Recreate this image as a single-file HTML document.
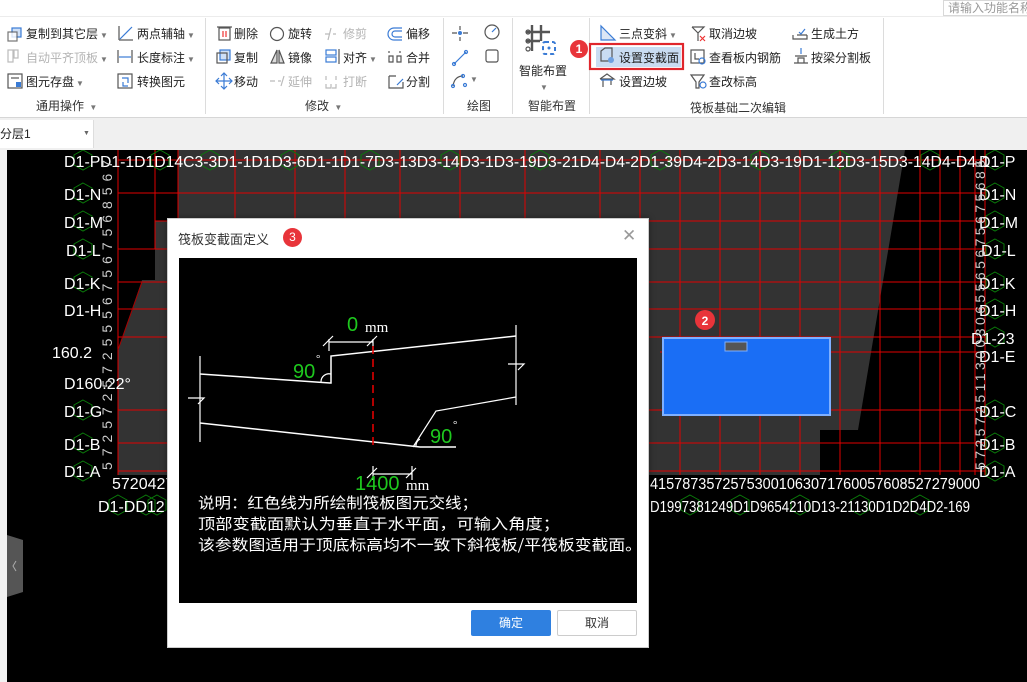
<!DOCTYPE html>
<html><head><meta charset="utf-8"><style>
*{margin:0;padding:0;box-sizing:border-box}
body{width:1027px;height:682px;overflow:hidden;position:relative;background:#fff;font-family:"Liberation Sans","Noto Sans CJK SC",sans-serif;font-size:12px;color:#222}
.a{position:absolute;white-space:nowrap}
.t{position:absolute;white-space:nowrap;font-size:12px;line-height:14px}
.g{color:#b4b4b4}
.sep{position:absolute;top:18px;width:1px;height:96px;background:#dcdcdc}
.lbl{position:absolute;top:97px;font-size:12px;color:#333}
.dd{font-size:8px;color:#777;margin-left:2px}
</style></head><body>
<div class="a" style="left:0;top:0;width:1027px;height:17px;background:#fff;border-bottom:1px solid #ececec"></div>
<div class="a" style="left:943px;top:0;width:90px;height:16px;border:1px solid #d8d8d8;color:#999;font-size:12px;line-height:14px;padding-left:4px">请输入功能名称</div>
<div class="a" style="left:0;top:17px;width:1027px;height:101px;background:#fff;border-bottom:1px solid #d6d6d6"></div>
<div class="sep" style="left:205px"></div><div class="sep" style="left:443px"></div><div class="sep" style="left:512px"></div><div class="sep" style="left:589px"></div><div class="sep" style="left:883px"></div>

<svg class="a" style="left:0;top:0" width="1027" height="118" fill="none" stroke-width="1.2">
<rect x="12" y="28" width="9" height="9" stroke="#3a7bd5" fill="#cfe0f7"/><rect x="8" y="32" width="9" height="9" stroke="#555" fill="#fff" opacity=".8"/>
<rect x="8" y="50" width="5" height="12" stroke="#bbb"/><rect x="14" y="50" width="4" height="8" stroke="#bbb"/>
<rect x="8" y="74" width="14" height="14" stroke="#555"/><line x1="11" y1="78" x2="19" y2="78" stroke="#555"/><rect x="16" y="82" width="5" height="5" fill="#3a7bd5"/>
<line x1="119" y1="26" x2="119" y2="40" stroke="#555"/><line x1="119" y1="40" x2="133" y2="40" stroke="#555"/><line x1="120" y1="39" x2="132" y2="27" stroke="#3a7bd5"/>
<line x1="118" y1="50" x2="118" y2="63" stroke="#555"/><line x1="132" y1="50" x2="132" y2="63" stroke="#555"/><line x1="119" y1="57" x2="131" y2="57" stroke="#3a7bd5"/>
<rect x="118" y="74" width="14" height="14" stroke="#555"/><path d="M122 78h6v5M128 86h-5v-4" stroke="#3a7bd5"/>
<rect x="219" y="28" width="11" height="12" stroke="#555"/><line x1="217" y1="27" x2="232" y2="27" stroke="#555"/><path d="M223 31v6M226 31v6" stroke="#e33"/>
<rect x="220" y="50" width="10" height="10" stroke="#3a7bd5" fill="#cfe0f7"/><rect x="217" y="53" width="10" height="10" stroke="#555"/>
<path d="M224 73v16M216 81h16M221 76l3-3 3 3M221 86l3 3 3-3M219 78l-3 3 3 3M229 78l3 3-3 3" stroke="#3a7bd5"/>
<circle cx="277" cy="34" r="6.5" stroke="#555"/>
<path d="M277 50l-6 13h6zM279 50l5 13h-5z" stroke="#555" fill="#ddd"/>
<path d="M270 81h5M278 81h3M284 76l-3 10" stroke="#bbb"/>
<path d="M325 34h5M333 34h3M331 28l-3 12" stroke="#bbb"/>
<rect x="326" y="50" width="10" height="5" stroke="#3a7bd5"/><rect x="326" y="57" width="10" height="5" stroke="#3a7bd5"/><line x1="339" y1="49" x2="339" y2="64" stroke="#555"/>
<path d="M326 76v4M326 84v4h5v-4M336 76v4M336 84v4h-4" stroke="#bbb"/>
<path d="M402 28h-8a6 6 0 0 0 0 12h8M402 31h-7a3 3 0 0 0 0 6h7" stroke="#3a7bd5"/>
<path d="M389 51v2M400 51v2M389 56h4v6h-4zM397 56h4v6h-4z" stroke="#555"/>
<path d="M389 76h7M389 76v12h14v-6" stroke="#555"/><path d="M397 85l6-6" stroke="#3a7bd5"/>
<path d="M452 33h5M463 33h5M460 26v4M460 37v4" stroke="#555"/><circle cx="460" cy="33" r="2" fill="#3a7bd5"/>
<circle cx="492" cy="32" r="7" stroke="#555"/><path d="M492 32l4-4" stroke="#3a7bd5"/>
<path d="M454 64l12-12" stroke="#3a7bd5"/><circle cx="454" cy="64" r="1.5" stroke="#3a7bd5"/><circle cx="466" cy="52" r="1.5" stroke="#3a7bd5"/>
<rect x="486" y="50" width="12" height="12" rx="2" stroke="#555"/>
<path d="M453 86c1-7 5-10 10-10" stroke="#555"/><circle cx="453" cy="86" r="1.5" stroke="#3a7bd5"/><circle cx="463" cy="76" r="1.5" stroke="#3a7bd5"/><circle cx="465" cy="85" r="1.5" stroke="#3a7bd5"/>
<path d="M532 25v26M541 25v16M526 32h24M526 41h14" stroke="#555" stroke-width="2.4"/><circle cx="528" cy="32" r="2" stroke="#555"/><circle cx="528" cy="41" r="2" stroke="#555"/><circle cx="528" cy="49" r="2" stroke="#555"/>
<rect x="543" y="42" width="12" height="12" rx="2" stroke="#3a7bd5" stroke-width="2" stroke-dasharray="4 3"/><circle cx="549" cy="48" r="1.5" fill="#3a7bd5"/>
<path d="M601 26v14h14z" stroke="#3a7bd5" fill="#dce6f5"/>
<rect x="590" y="44" width="93" height="25" stroke="#e0262c" stroke-width="2.2"/>
<rect x="596" y="47" width="85" height="20" fill="#c9dcf2" stroke="none"/>
<path d="M601 51l4-3h7v13h-11z" stroke="#555"/><circle cx="611" cy="60" r="3" fill="#6fa0e0" stroke="none"/>
<path d="M600 79l7-5 7 5h-14M603 79v8M611 79v6" stroke="#555"/><path d="M601 80l12 0" stroke="#3a7bd5"/>
<path d="M692 27h12l-6 6M698 33v8M692 27l6 6" stroke="#555"/><path d="M700 36l5 5M705 36l-5 5" stroke="#e33"/>
<rect x="691" y="50" width="13" height="13" stroke="#555"/><circle cx="702" cy="61" r="3" stroke="#3a7bd5"/><path d="M695 53v6h4" stroke="#555"/>
<path d="M691 75h13l-5 7v6h-3v-6z" stroke="#555"/><circle cx="703" cy="85" r="3" stroke="#3a7bd5"/>
<path d="M793 35v4h14v-4M797 35h10" stroke="#555"/><path d="M799 32l2 2 4-5" stroke="#3a7bd5"/>
<path d="M795 56h12M798 58h6v5h-6zM794 63h14" stroke="#555"/><path d="M801 48v6" stroke="#3a7bd5"/>
</svg>

<div class="t" style="left:26px;top:27px">复制到其它层<span class="dd">▼</span></div>
<div class="t g" style="left:26px;top:51px">自动平齐顶板<span class="dd">▼</span></div>
<div class="t" style="left:26px;top:75px">图元存盘<span class="dd">▼</span></div>
<div class="t" style="left:137px;top:27px">两点辅轴<span class="dd">▼</span></div>
<div class="t" style="left:137px;top:51px">长度标注<span class="dd">▼</span></div>
<div class="t" style="left:137px;top:75px">转换图元</div>
<div class="lbl" style="left:36px">通用操作 <span class="dd">▼</span></div>
<div class="t" style="left:234px;top:27px">删除</div><div class="t" style="left:234px;top:51px">复制</div><div class="t" style="left:234px;top:75px">移动</div>
<div class="t" style="left:288px;top:27px">旋转</div><div class="t" style="left:288px;top:51px">镜像</div><div class="t g" style="left:288px;top:75px">延伸</div>
<div class="t g" style="left:343px;top:27px">修剪</div><div class="t" style="left:343px;top:51px">对齐<span class="dd">▼</span></div><div class="t g" style="left:343px;top:75px">打断</div>
<div class="t" style="left:406px;top:27px">偏移</div><div class="t" style="left:406px;top:51px">合并</div><div class="t" style="left:406px;top:75px">分割</div>
<div class="lbl" style="left:305px">修改 <span class="dd">▼</span></div>
<div class="t" style="left:470px;top:73px;font-size:8px;color:#777">▼</div>
<div class="lbl" style="left:467px">绘图</div>
<div class="t" style="left:519px;top:64px">智能布置</div>
<div class="t" style="left:540px;top:81px;font-size:8px;color:#777">▼</div>
<div class="lbl" style="left:528px">智能布置</div>
<div class="t" style="left:619px;top:27px">三点变斜<span class="dd">▼</span></div>
<div class="t" style="left:619px;top:51px">设置变截面</div>
<div class="t" style="left:619px;top:75px">设置边坡</div>
<div class="t" style="left:709px;top:27px">取消边坡</div><div class="t" style="left:709px;top:51px">查看板内钢筋</div><div class="t" style="left:709px;top:75px">查改标高</div>
<div class="t" style="left:811px;top:27px">生成土方</div><div class="t" style="left:811px;top:51px">按梁分割板</div>
<div class="lbl" style="left:690px;top:99px">筏板基础二次编辑</div>
<div class="a" style="left:570px;top:40px;width:18px;height:18px;border-radius:9px;background:#e8343a;color:#fff;font-weight:bold;font-size:12px;line-height:18px;text-align:center">1</div>

<div class="a" style="left:0;top:118px;width:1027px;height:32px;background:#f0f0f0"></div>
<div class="a" style="left:0;top:120px;width:94px;height:28px;background:#fff;border-right:1px solid #ddd;line-height:28px;font-size:12px">分层1<span style="position:absolute;left:83px;font-size:7px;color:#666">▼</span></div>
<div class="a" style="left:0;top:150px;width:7px;height:532px;background:#f2f2f2"></div>

<svg class="a" style="left:7px;top:150px" width="1020" height="532" viewBox="7 150 1020 532">
<rect x="7" y="150" width="1020" height="532" fill="#000"/>
<path d="M178 150H905L858 430H820V475H118V350L142 280H155V221H178Z" fill="#333"/>
<g stroke="#e00000" stroke-width="1">
<path d="M118 160H985M118 193H985M155 221H985M118 249H985M118 282H985M118 309H985M118 337H985M660 352H985M118 410H985M118 443H985M118 471H985"/>
<path d="M118 150V475M155 150V249M178 150V475M235 150V475M295 150V475M345 150V475M400 150V475M460 150V475M525 150V475M600 150V475M640 150V475M680 150V475M720 150V475M760 150V475M800 150V475M840 150V475M880 150V475M920 150V475M940 150V475M960 150V475M975 150V475M985 150V475"/>
<path d="M142 282L118 350" stroke="#a00"/>
</g>
<path d="M663 338H830V415H663Z" fill="#1a6ef5" stroke="#7fb0ff" stroke-width="2"/>
<rect x="725" y="342" width="22" height="9" fill="#555" stroke="#7fb0ff"/>
<g fill="none" stroke="#0a7a0a" stroke-width="1">
<path d="M0-10L9-5V5L0 10L-9 5V-5Z" transform="translate(83 160)"/>
<path d="M0-10L9-5V5L0 10L-9 5V-5Z" transform="translate(83 193)"/><path d="M0-10L9-5V5L0 10L-9 5V-5Z" transform="translate(83 221)"/><path d="M0-10L9-5V5L0 10L-9 5V-5Z" transform="translate(83 249)"/><path d="M0-10L9-5V5L0 10L-9 5V-5Z" transform="translate(83 282)"/><path d="M0-10L9-5V5L0 10L-9 5V-5Z" transform="translate(83 410)"/><path d="M0-10L9-5V5L0 10L-9 5V-5Z" transform="translate(83 443)"/><path d="M0-10L9-5V5L0 10L-9 5V-5Z" transform="translate(83 471)"/>
<path d="M0-10L9-5V5L0 10L-9 5V-5Z" transform="translate(995 160)"/><path d="M0-10L9-5V5L0 10L-9 5V-5Z" transform="translate(995 193)"/><path d="M0-10L9-5V5L0 10L-9 5V-5Z" transform="translate(995 221)"/><path d="M0-10L9-5V5L0 10L-9 5V-5Z" transform="translate(995 249)"/><path d="M0-10L9-5V5L0 10L-9 5V-5Z" transform="translate(995 282)"/><path d="M0-10L9-5V5L0 10L-9 5V-5Z" transform="translate(995 309)"/><path d="M0-10L9-5V5L0 10L-9 5V-5Z" transform="translate(995 337)"/><path d="M0-10L9-5V5L0 10L-9 5V-5Z" transform="translate(995 410)"/><path d="M0-10L9-5V5L0 10L-9 5V-5Z" transform="translate(995 443)"/><path d="M0-10L9-5V5L0 10L-9 5V-5Z" transform="translate(995 471)"/>
<path d="M0-10L9-5V5L0 10L-9 5V-5Z" transform="translate(118 505)"/><path d="M0-10L9-5V5L0 10L-9 5V-5Z" transform="translate(146 505)"/><path d="M0-10L9-5V5L0 10L-9 5V-5Z" transform="translate(157 505)"/>
<path d="M0-10L9-5V5L0 10L-9 5V-5Z" transform="translate(690 505)"/><path d="M0-10L9-5V5L0 10L-9 5V-5Z" transform="translate(740 505)"/><path d="M0-10L9-5V5L0 10L-9 5V-5Z" transform="translate(800 505)"/><path d="M0-10L9-5V5L0 10L-9 5V-5Z" transform="translate(860 505)"/><path d="M0-10L9-5V5L0 10L-9 5V-5Z" transform="translate(920 505)"/>
<path d="M0-10L9-5V5L0 10L-9 5V-5Z" transform="translate(160 160)"/><path d="M0-10L9-5V5L0 10L-9 5V-5Z" transform="translate(210 160)"/><path d="M0-10L9-5V5L0 10L-9 5V-5Z" transform="translate(290 160)"/><path d="M0-10L9-5V5L0 10L-9 5V-5Z" transform="translate(370 160)"/><path d="M0-10L9-5V5L0 10L-9 5V-5Z" transform="translate(450 160)"/><path d="M0-10L9-5V5L0 10L-9 5V-5Z" transform="translate(540 160)"/><path d="M0-10L9-5V5L0 10L-9 5V-5Z" transform="translate(660 160)"/><path d="M0-10L9-5V5L0 10L-9 5V-5Z" transform="translate(760 160)"/><path d="M0-10L9-5V5L0 10L-9 5V-5Z" transform="translate(840 160)"/><path d="M0-10L9-5V5L0 10L-9 5V-5Z" transform="translate(930 160)"/>
</g>
<g fill="#fff" font-family="Liberation Sans" font-size="16">
<text x="64" y="167">D1-P</text><text x="64" y="200">D1-N</text><text x="64" y="228">D1-M</text><text x="66" y="256">D1-L</text><text x="64" y="289">D1-K</text><text x="64" y="316">D1-H</text><text x="52" y="358">160.2</text><text x="64" y="389">D160.22°</text><text x="64" y="417">D1-G</text><text x="64" y="450">D1-B</text><text x="64" y="477">D1-A</text>
<text x="979" y="167">D1-P</text><text x="979" y="200">D1-N</text><text x="979" y="228">D1-M</text><text x="981" y="256">D1-L</text><text x="979" y="289">D1-K</text><text x="979" y="316">D1-H</text><text x="971" y="344">D1-23</text><text x="979" y="362">D1-E</text><text x="979" y="417">D1-C</text><text x="979" y="450">D1-B</text><text x="979" y="477">D1-A</text>
<text x="100" y="167" textLength="890" lengthAdjust="spacingAndGlyphs">D1-1D1D14C3-3D1-1D1D3-6D1-1D1-7D3-13D3-14D3-1D3-19D3-21D4-D4-2D1-39D4-2D3-14D3-19D1-12D3-15D3-14D4-D4-1</text>
<text x="112" y="489">5720427</text>
<text x="650" y="489" textLength="330" lengthAdjust="spacingAndGlyphs">41578735725753001063071760057608527279000</text>
<text x="98" y="512">D1-DD12</text>
<text x="650" y="512" textLength="320" lengthAdjust="spacingAndGlyphs">D1997381249D1D9654210D13-21130D1D2D4D2-169</text>
</g>
<g fill="#ccc" font-family="Liberation Sans" font-size="14"><text transform="translate(112 470) rotate(-90)" textLength="310">57257257255567567568567</text><text transform="translate(985 470) rotate(-90)" textLength="310">5725725113003065565675675685</text></g>
<circle cx="705" cy="320" r="10" fill="#e8343a"/><text x="705" y="325" fill="#fff" font-family="Liberation Sans" font-size="12" font-weight="bold" text-anchor="middle">2</text>
<path d="M7 535L23 540V592L7 597Z" fill="#555"/><path d="M16 561l-3 5 3 5" stroke="#aaa" fill="none"/>
</svg>

<div class="a" style="left:167px;top:218px;width:482px;height:430px;background:#fff;border:1px solid #ccc;box-shadow:0 0 6px rgba(0,0,0,.4)"></div>
<div class="a" style="left:178px;top:229px;font-size:13px;color:#333">筏板变截面定义</div>
<div class="a" style="left:283px;top:228px;width:19px;height:19px;border-radius:10px;background:#e8343a;color:#fff;font-size:12px;line-height:19px;text-align:center">3</div>
<div class="a" style="left:622px;top:226px;font-size:17px;color:#999">✕</div>
<svg class="a" style="left:179px;top:258px" width="458" height="345" viewBox="179 258 458 345">
<rect x="179" y="258" width="458" height="345" fill="#000"/>
<g stroke="#fff" fill="none" stroke-width="1.2">
<path d="M200 356V442M516 325V405"/>
<path d="M200 374L330 383H331V356L516 336" stroke-width="1.5"/>
<path d="M200 423L420 447H456" stroke-width="1.5"/>
<path d="M413 447L436 411L516 397"/>
<path d="M329 339V351M373 339V351M329 342H373M323 346l10-10M367 346l10-10"/>
<path d="M373 474H412M373 466V480M412 466V480M367 478l10-10M406 478l10-10"/>
<path d="M188 398h16l-6 6M508 364h16l-6 6M331 374a8 8 0 0 0-10 8M416 447a8 8 0 0 1 4-8"/>
</g>
<path d="M373 346V446" stroke="#e00" stroke-width="1.5" stroke-dasharray="8 5"/>
<g font-family="Liberation Sans" font-size="20" fill="#1ec81e"><text x="347" y="331">0</text><text x="293" y="378">90</text><text x="430" y="443">90</text><text x="355" y="490">1400</text></g>
<g font-family="Liberation Serif" font-size="15" fill="#fff"><text x="365" y="332">mm</text><text x="406" y="490">mm</text><text x="316" y="362" font-size="11">°</text><text x="453" y="428" font-size="11">°</text></g>
<g font-family="Noto Sans CJK SC" font-size="15" fill="#fff"><text x="198" y="508" textLength="280" lengthAdjust="spacingAndGlyphs">说明：红色线为所绘制筏板图元交线；</text><text x="198" y="529" textLength="362" lengthAdjust="spacingAndGlyphs">顶部变截面默认为垂直于水平面，可输入角度；</text><text x="198" y="550" textLength="444" lengthAdjust="spacingAndGlyphs">该参数图适用于顶底标高均不一致下斜筏板/平筏板变截面。</text></g>
</svg>
<div class="a" style="left:471px;top:610px;width:80px;height:26px;background:#2f80e0;border-radius:2px;color:#fff;font-size:12px;line-height:26px;text-align:center">确定</div>
<div class="a" style="left:557px;top:610px;width:80px;height:26px;background:#fff;border:1px solid #ccc;border-radius:2px;color:#333;font-size:12px;line-height:24px;text-align:center">取消</div>
</body></html>
